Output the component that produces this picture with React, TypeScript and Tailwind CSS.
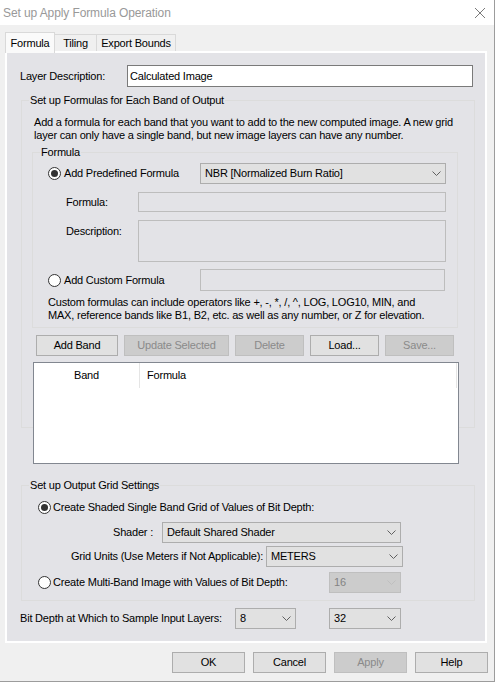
import React from 'react';

interface ComboProps {
    value: string;
    className?: string;
    disabled?: boolean;
}

function Chevron({ color }: { color: string }) {
    return (
        <svg width="9" height="5" viewBox="0 0 9 5" fill="none">
            <path d="M0.5 0.5 L4.5 4.5 L8.5 0.5" stroke={color} strokeWidth="1" />
        </svg>
    );
}

function Combo({ value, className = '', disabled }: ComboProps) {
    return (
        <div
            className={`flex items-center h-[21px] border ${
                disabled ? 'bg-[#cccccc] border-[#bfbfbf] text-[#838383]' : 'bg-[#e1e1e1] border-[#adadad]'
            } ${className}`}
        >
            <span className="flex-1 pl-[4px] whitespace-nowrap overflow-hidden">{value}</span>
            <span className="w-[18px] flex justify-center">
                <Chevron color={disabled ? '#bfbfbf' : '#606060'} />
            </span>
        </div>
    );
}

function Radio({ checked }: { checked?: boolean }) {
    return (
        <span className="w-[13px] h-[13px] rounded-full border border-[#333333] bg-white flex items-center justify-center shrink-0">
            {checked && <span className="w-[7px] h-[7px] rounded-full bg-[#333333]" />}
        </span>
    );
}

function Btn({ label, width, disabled }: { label: string; width: string; disabled?: boolean }) {
    return (
        <div
            className={`${width} h-[21px] flex items-center justify-center border ${
                disabled ? 'bg-[#cccccc] border-[#bfbfbf] text-[#8a8a8a]' : 'bg-[#e1e1e1] border-[#adadad]'
            }`}
        >
            {label}
        </div>
    );
}

export default function App() {
    return (
        <div className="w-[495px] h-[682px] bg-[#f0f0f0] border-r border-b border-[#9c9c9c] flex flex-col overflow-hidden text-black text-[11px] tracking-[-0.2px] font-['Liberation_Sans',Arial,sans-serif]">
            {/* title bar */}
            <div className="h-[25px] bg-white flex items-center justify-between pl-[3px] pr-[9px] shrink-0">
                <span className="text-[12px] tracking-[-0.1px] text-[#999999]">Set up Apply Formula Operation</span>
                <svg width="10" height="10" viewBox="0 0 10 10" fill="none">
                    <path d="M0 0 L10 10 M10 0 L0 10" stroke="#7a7a7a" strokeWidth="1" />
                </svg>
            </div>

            {/* tabs */}
            <div className="flex items-end h-[19px] mt-[7px] ml-[5px] relative z-10 shrink-0">
                <div className="w-[50px] h-[21px] mb-[-2px] bg-[#fafafa] border border-b-0 border-[#d9d9d9] flex items-center justify-center">
                    Formula
                </div>
                <div className="w-[42px] h-[17px] bg-[#f0f0f0] border border-l-0 border-b-0 border-[#d9d9d9] flex items-center justify-center">
                    Tiling
                </div>
                <div className="w-[79px] h-[17px] bg-[#f0f0f0] border border-l-0 border-b-0 border-[#d9d9d9] flex items-center justify-center">
                    Export Bounds
                </div>
            </div>

            {/* tab page */}
            <div className="ml-[5px] w-[482px] h-[592px] border-2 border-white bg-[#e3e3e7] flex flex-col shrink-0">
                <div className="flex items-center mt-[12px] pl-[13px]">
                    <span className="w-[107px]">Layer Description:</span>
                    <div className="w-[346px] h-[22px] bg-white border border-[#7a7a7a] pl-[2px] flex items-center">
                        Calculated Image
                    </div>
                </div>

                {/* formulas group */}
                <fieldset className="ml-[14px] w-[454px] mt-[6px] border border-[#dcdcdc]">
                    <legend className="ml-[7px] px-[1px] leading-[14px]">Set up Formulas for Each Band of Output</legend>
                    <p className="ml-[12px] mt-[9px] leading-[13px] whitespace-nowrap">
                        Add a formula for each band that you want to add to the new computed image. A new grid
                        <br />
                        layer can only have a single band, but new image layers can have any number.
                    </p>

                    <fieldset className="ml-[10px] w-[426px] mt-[3px] border border-[#dcdcdc] pb-[5px]">
                        <legend className="ml-[7px] px-[1px] leading-[14px]">Formula</legend>

                        <div className="flex items-center h-[21px] mt-[4px]">
                            <div className="w-[167px] flex items-center pl-[15px] gap-[3px]">
                                <Radio checked />
                                <span>Add Predefined Formula</span>
                            </div>
                            <Combo value="NBR [Normalized Burn Ratio]" className="w-[246px]" />
                        </div>

                        <div className="flex items-center h-[20px] mt-[8px]">
                            <span className="w-[105px] pl-[33px]">Formula:</span>
                            <div className="w-[308px] h-[20px] border border-[#bdbdbd]" />
                        </div>

                        <div className="flex mt-[8px]">
                            <span className="w-[105px] pl-[33px] pt-[5px] leading-[13px]">Description:</span>
                            <div className="w-[308px] h-[42px] border border-[#bdbdbd]" />
                        </div>

                        <div className="flex items-center h-[22px] mt-[7px]">
                            <div className="w-[167px] flex items-center pl-[15px] gap-[3px]">
                                <Radio />
                                <span>Add Custom Formula</span>
                            </div>
                            <div className="w-[245px] h-[22px] border border-[#bdbdbd]" />
                        </div>

                        <p className="mt-[5px] ml-[15px] leading-[13px] whitespace-nowrap">
                            Custom formulas can include operators like +, -, *, /, ^, LOG, LOG10, MIN, and
                            <br />
                            MAX, reference bands like B1, B2, etc. as well as any number, or Z for elevation.
                        </p>
                    </fieldset>

                    <div className="flex gap-[6px] mt-[7px] ml-[14px]">
                        <Btn label="Add Band" width="w-[82px]" />
                        <Btn label="Update Selected" width="w-[105px]" disabled />
                        <Btn label="Delete" width="w-[69px]" disabled />
                        <Btn label="Load..." width="w-[69px]" />
                        <Btn label="Save..." width="w-[69px]" disabled />
                    </div>

                    <div className="ml-[11px] mt-[6px] w-[426px] h-[102px] mb-[-37px] bg-white border border-[#828790] flex flex-col">
                        <div className="flex h-[25px]">
                            <div className="w-[106px] flex items-center justify-center border-r border-[#e5e5e5]">Band</div>
                            <div className="w-[317px] flex items-center pl-[7px] border-r border-[#e5e5e5]">Formula</div>
                        </div>
                    </div>
                </fieldset>

                {/* output grid group */}
                <fieldset className="ml-[14px] w-[454px] mt-[50px] border border-[#dcdcdc] pb-[7px]">
                    <legend className="ml-[7px] px-[1px] leading-[14px]">Set up Output Grid Settings</legend>

                    <div className="flex items-center h-[14px] mt-[8px] pl-[16px] gap-[2px]">
                        <Radio checked />
                        <span>Create Shaded Single Band Grid of Values of Bit Depth:</span>
                    </div>

                    <div className="flex items-center mt-[8px]">
                        <span className="w-[131px] text-right">Shader :</span>
                        <Combo value="Default Shared Shader" className="ml-[9px] w-[239px]" />
                    </div>

                    <div className="flex items-center mt-[3px]">
                        <span className="w-[241px] text-right">Grid Units (Use Meters if Not Applicable):</span>
                        <Combo value="METERS" className="ml-[3px] w-[137px]" />
                    </div>

                    <div className="flex items-center h-[21px] mt-[5px]">
                        <div className="w-[307px] flex items-center pl-[16px] gap-[2px]">
                            <Radio />
                            <span>Create Multi-Band Image with Values of Bit Depth:</span>
                        </div>
                        <Combo value="16" className="w-[72px]" disabled />
                    </div>
                </fieldset>

                <div className="flex items-center mt-[7px] pl-[13px]">
                    <span className="w-[215px]">Bit Depth at Which to Sample Input Layers:</span>
                    <Combo value="8" className="w-[61px]" />
                    <Combo value="32" className="ml-[33px] w-[72px]" />
                </div>
            </div>

            {/* dialog buttons */}
            <div className="flex gap-[8px] mt-[9px] ml-[172px]">
                <Btn label="OK" width="w-[73px]" />
                <Btn label="Cancel" width="w-[73px]" />
                <Btn label="Apply" width="w-[73px]" disabled />
                <Btn label="Help" width="w-[73px]" />
            </div>
        </div>
    );
}
